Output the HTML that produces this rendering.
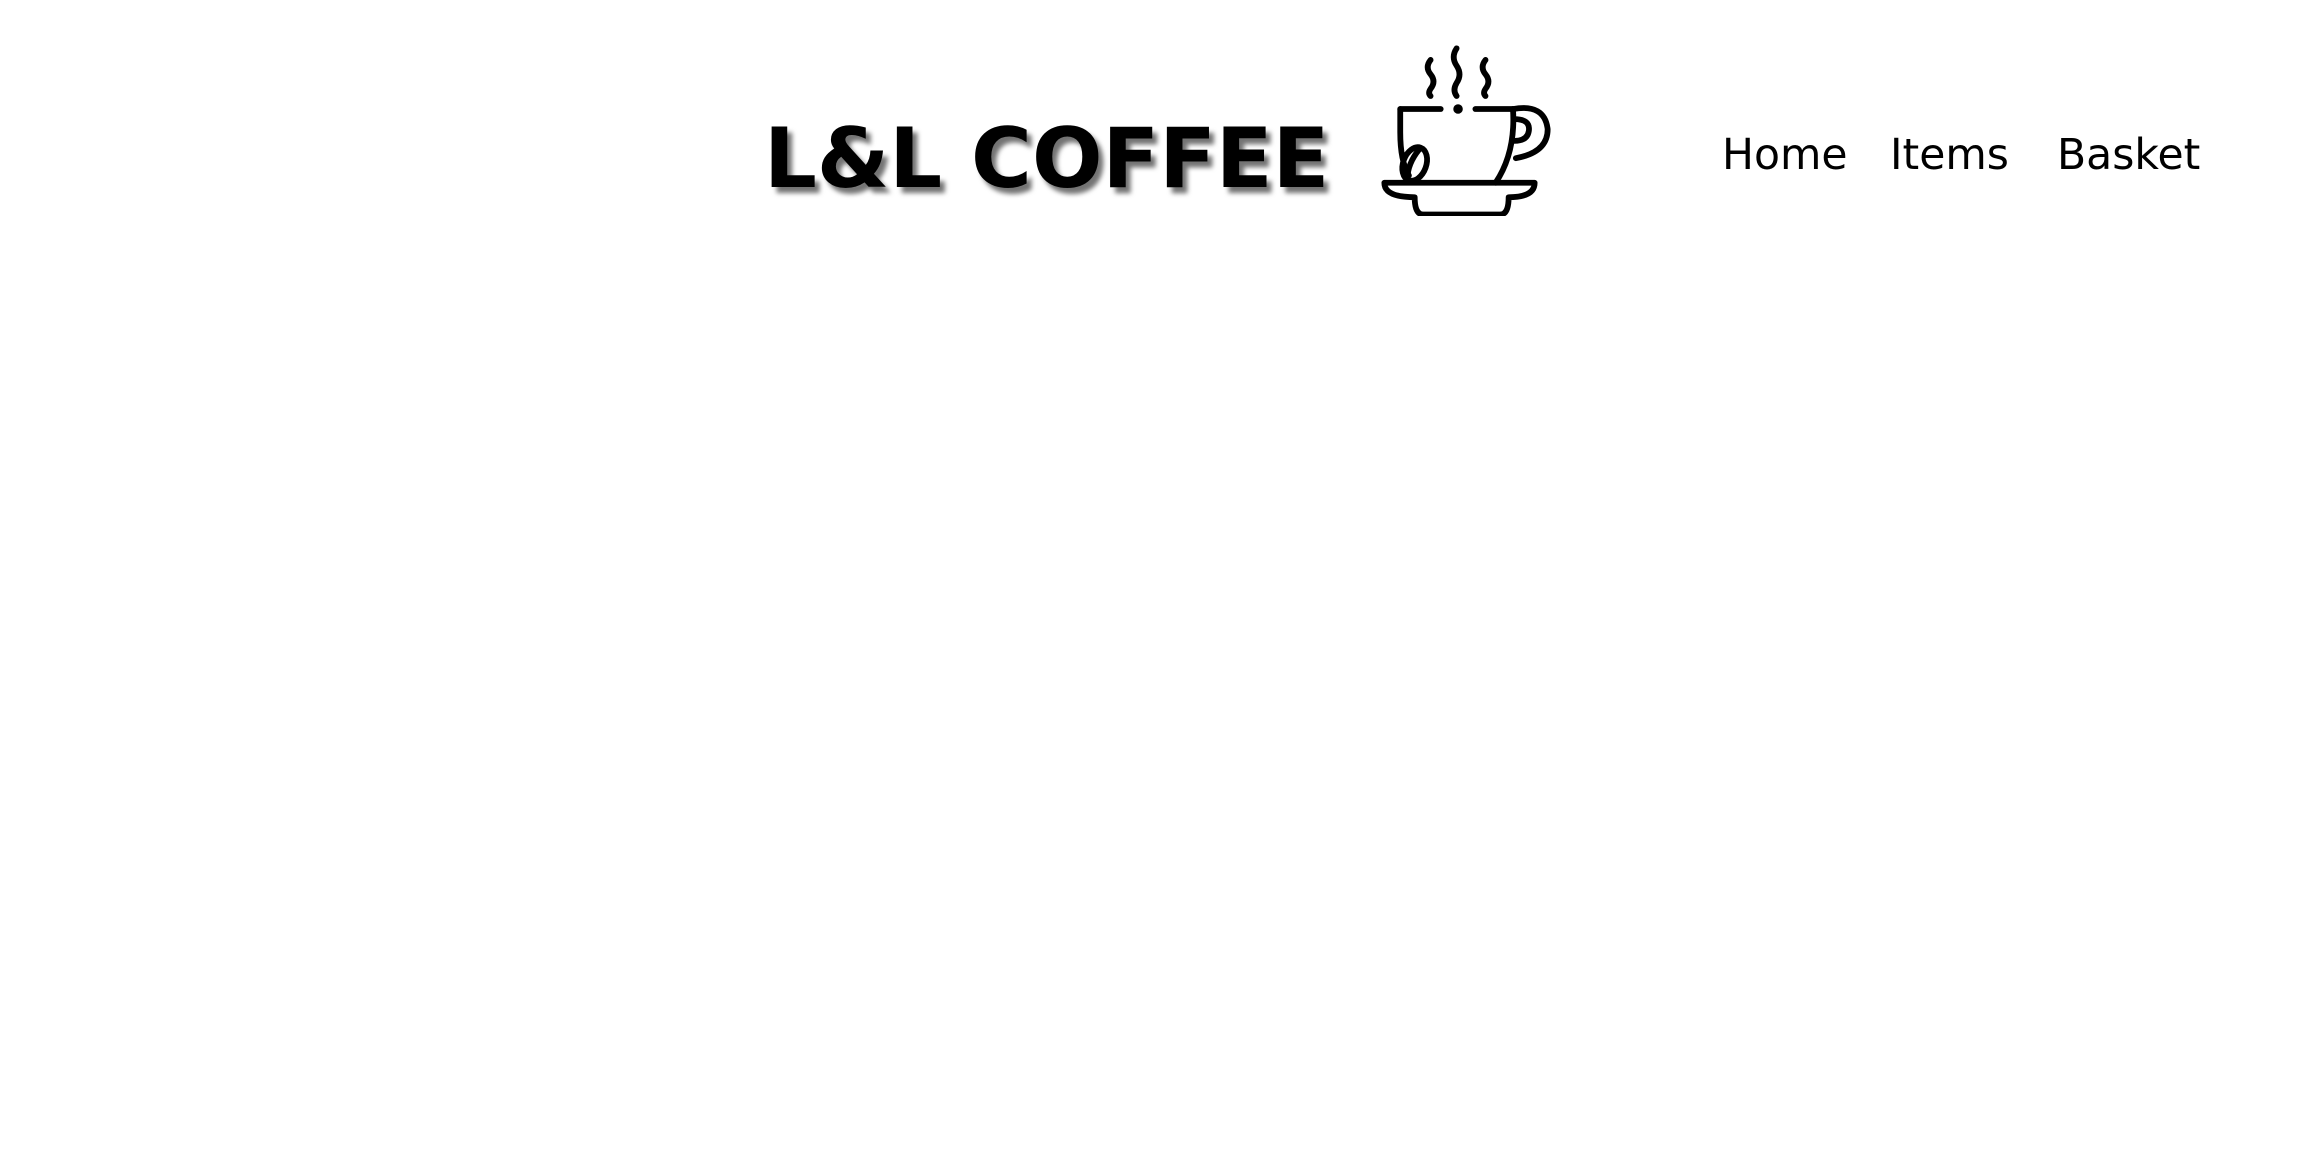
<!DOCTYPE html>
<html><head><meta charset="utf-8"><style>
html,body{margin:0;padding:0;background:#fff;width:2303px;height:1151px;overflow:hidden}
.t{position:absolute;left:764px;top:110px;font:bold 83px "DejaVu Sans",sans-serif;color:#000;white-space:nowrap;text-shadow:5px 6px 5px rgba(0,0,0,.55)}
.n{position:absolute;top:131px;font:42.5px "DejaVu Sans",sans-serif;color:#000}
svg{position:absolute;left:1381px;top:44px}
</style></head><body>
<div class="t">L&amp;L COFFEE</div>
<svg width="170" height="172" viewBox="-1 -1 117 119" fill="none" stroke="#000" stroke-width="4" stroke-linecap="round" stroke-linejoin="round">
<path d="M33 10 q-4 5 0 10 q4 5 0 10 q-2 3 0 5"/>
<path d="M51 2 q-4 6 0 12 q4 6 0 12 q-3 5 0 9"/>
<path d="M71 10 q-4 5 0 10 q4 5 0 10 q-2 3 0 5"/>
<path d="M12 44 H40 M64 44 H90"/>
<circle cx="52" cy="44" r="1.3" fill="#000"/>
<path d="M12 44 V60 q0 20 6 30"/>
<path d="M90 44 q2 30 -12 51"/>
<path d="M90 44 q22 -4 24 14 q0 16 -22 20"/>
<path d="M91 51 q11 0 10 8 q-1 7 -10 7"/>
<ellipse cx="22" cy="82" rx="8" ry="12" transform="rotate(20 22 82)"/>
<path d="M17 92 q0 -10 8 -20"/>
<path d="M1 95 H105 q0 10 -18 10 q0 12 -6 12 H28 q-6 0 -6 -12 q-21 0 -21 -10z"/>
</svg>
<div class="n" style="left:1722px">Home</div>
<div class="n" style="left:1890px">Items</div>
<div class="n" style="left:2057px">Basket</div>
</body></html>
